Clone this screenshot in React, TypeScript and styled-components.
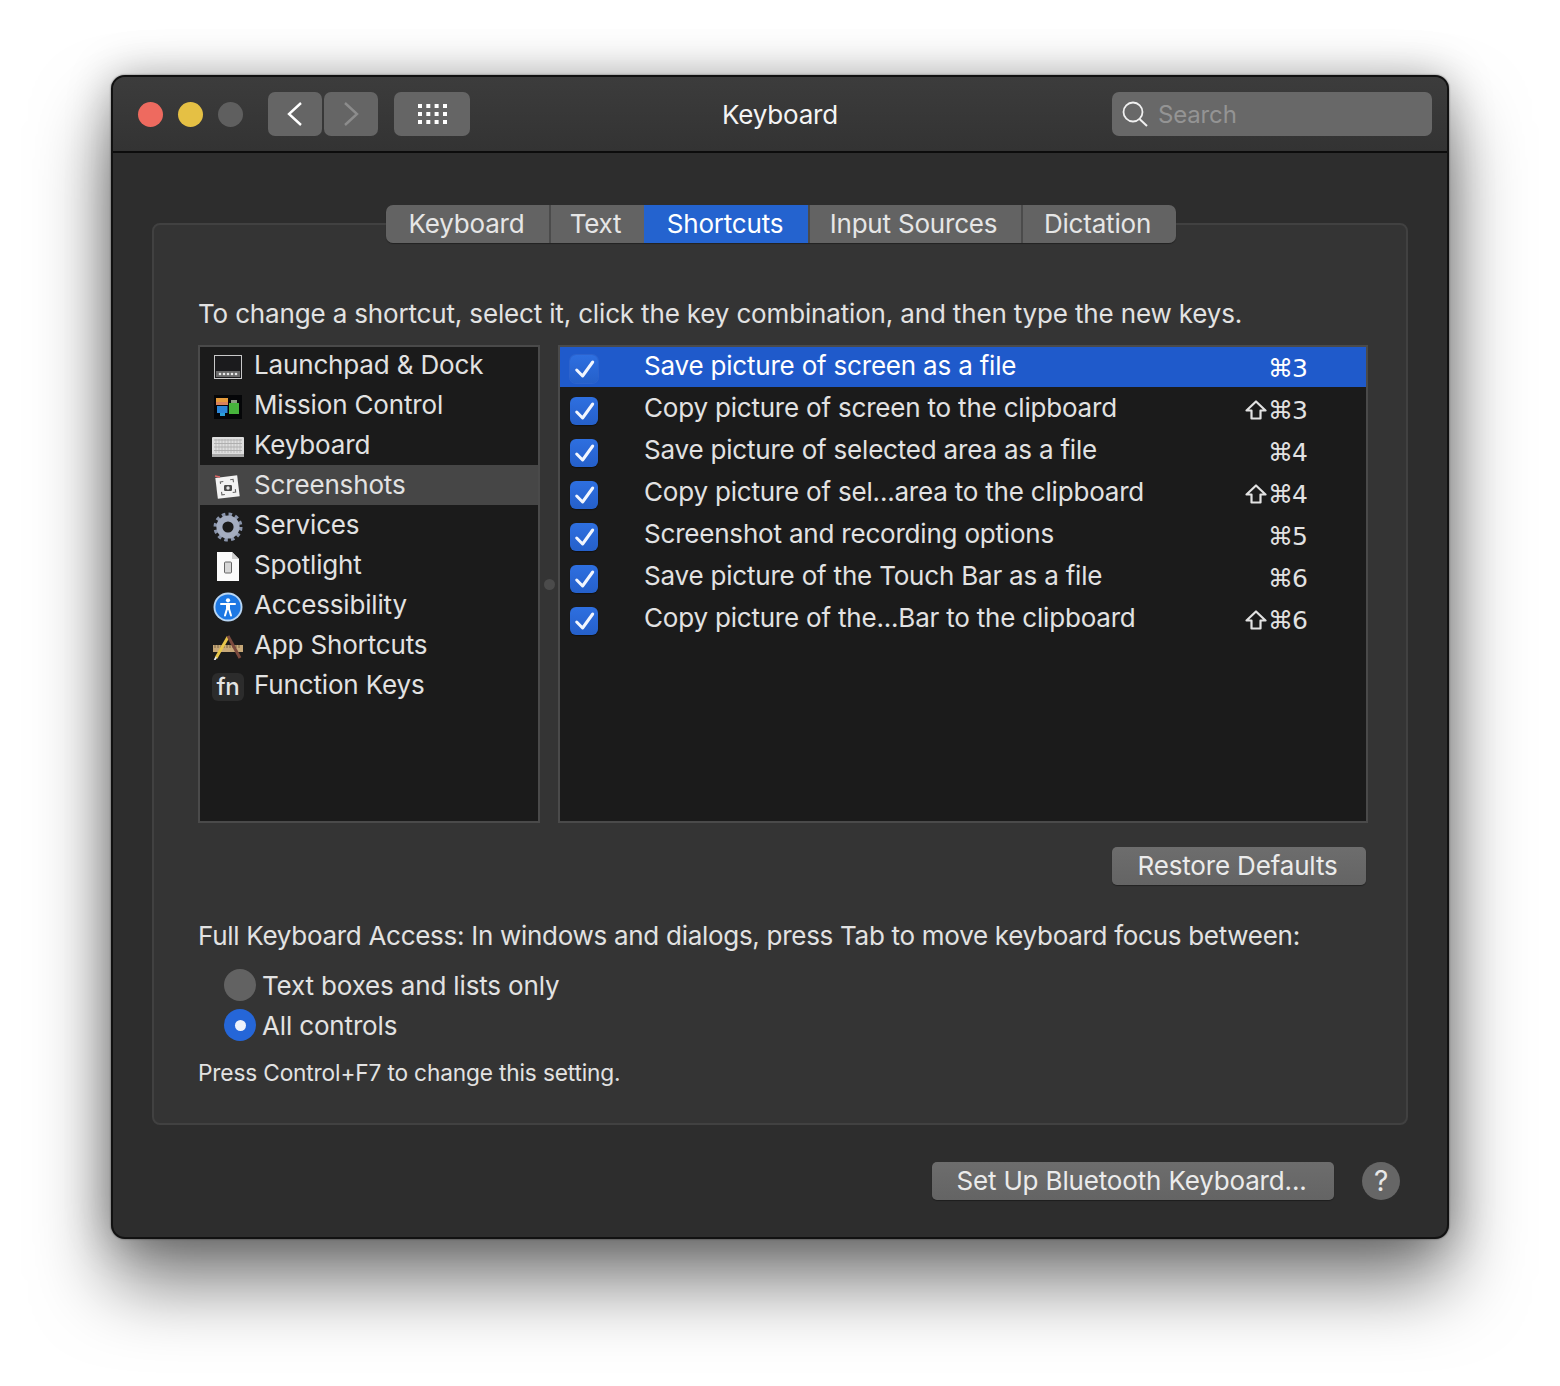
import { ReactNode } from "react";
import { createGlobalStyle, styled } from "styled-components";

const GlobalStyle = createGlobalStyle`
  html, body {
    margin: 0;
    padding: 0;
    background: #fff;
    font-family: Inter, "Liberation Sans", sans-serif;
  }
  * {
    box-sizing: border-box;
  }
`;

const Page = styled.div`
  width: 1560px;
  height: 1386px;
  padding: 75px 111px 0;
  overflow: hidden;
`;

const Window = styled.div`
  width: 1338px;
  height: 1164px;
  display: flex;
  flex-direction: column;
  background: #2d2d2d;
  border: 2px solid #111;
  border-radius: 14px;
  box-shadow: 0 0 2px rgba(0, 0, 0, 0.6), 0 44px 76px rgba(0, 0, 0, 0.52), 0 0 44px rgba(0, 0, 0, 0.28);
  color: #e2e2e2;
  letter-spacing: -0.16px;
  overflow: hidden;
`;

const TitleBar = styled.header`
  position: relative;
  flex: none;
  height: 76px;
  display: flex;
  align-items: center;
  padding: 0 15px 0 25px;
  background: linear-gradient(#3c3c3c, #333);
  border-bottom: 2px solid #0c0c0c;
`;

const TrafficLights = styled.div`
  display: flex;
  margin-right: 10px;
`;

const Light = styled.span<{ $color: string }>`
  width: 25px;
  height: 25px;
  margin-right: 15px;
  border-radius: 50%;
  background: ${(props) => props.$color};
`;

const ToolButton = styled.div<{ $width: number; $gap?: number }>`
  width: ${(props) => props.$width}px;
  height: 44px;
  margin-right: ${(props) => props.$gap ?? 0}px;
  display: flex;
  align-items: center;
  justify-content: center;
  background: #656565;
  border-radius: 7px;
`;

const Title = styled.div`
  position: absolute;
  left: 0;
  right: 0;
  top: 21px;
  text-align: center;
  font-size: 26px;
  line-height: 34px;
  letter-spacing: -0.16px;
  color: #f4f4f4;
  pointer-events: none;
`;

const SearchBox = styled.div`
  width: 320px;
  height: 44px;
  margin-left: auto;
  display: flex;
  align-items: center;
  gap: 10px;
  padding-left: 10px;
  background: #686868;
  border-radius: 7px;
  color: #949494;
  font-size: 24px;
`;

const Content = styled.main`
  flex: 1;
  display: flex;
  flex-direction: column;
  padding: 52px 39px 0;
`;

const TabBar = styled.nav`
  position: relative;
  z-index: 1;
  align-self: center;
  height: 38px;
  margin: 0 0 -20px 2px;
  display: flex;
  border-radius: 7px;
  overflow: hidden;
  box-shadow: 0 1px 1px rgba(0, 0, 0, 0.35);
`;

const Tab = styled.div<{ $width: number; $active?: boolean }>`
  width: ${(props) => props.$width}px;
  display: flex;
  align-items: center;
  justify-content: center;
  padding: 0 2px 2px 0;
  font-size: 26px;
  letter-spacing: -0.2px;
  color: ${(props) => (props.$active ? "#fff" : "#e6e6e6")};
  background: ${(props) => (props.$active ? "#2463cf" : "#636363")};
  box-shadow: ${(props) => (props.$active ? "none" : "inset 2px 0 #4b4b4b")};
  &:first-child {
    box-shadow: none;
  }
`;

const Panel = styled.section`
  height: 902px;
  padding: 72px 38px 0 44px;
  background: #343434;
  border: 2px solid #414141;
  border-radius: 8px;
`;

const Lead = styled.p`
  margin: 0 0 14px;
  font-size: 26px;
  line-height: 34px;
  white-space: nowrap;
`;

const Lists = styled.div`
  display: flex;
  height: 478px;
`;

const ListBox = styled.div<{ $width: number }>`
  width: ${(props) => props.$width}px;
  background: #1b1b1b;
  border: 2px solid #4a4a4a;
  overflow: hidden;
`;

const Rows = styled.ul`
  margin: -2px 0 0;
  padding: 0;
  list-style: none;
`;

const Gutter = styled.div`
  width: 18px;
  display: flex;
  align-items: center;
  justify-content: center;
`;

const Handle = styled.span`
  width: 11px;
  height: 11px;
  border-radius: 50%;
  background: #4b4b4b;
`;

const CategoryRow = styled.li<{ $selected?: boolean }>`
  height: 40px;
  display: flex;
  align-items: center;
  gap: 10px;
  padding: 0 0 2px 12px;
  font-size: 26px;
  background: ${(props) => (props.$selected ? "#464646" : "transparent")};
`;

const IconSlot = styled.span`
  width: 32px;
  height: 32px;
  flex: none;
  margin-top: 5px;
  display: flex;
  align-items: center;
  justify-content: center;
`;

const FnKey = styled.span`
  width: 32px;
  height: 28px;
  display: flex;
  align-items: center;
  justify-content: center;
  padding-bottom: 1px;
  border-radius: 6px;
  background: #2c2c2c;
  font-size: 24px;
  font-weight: 500;
  color: #e4e4e4;
`;

const ShortcutRow = styled.li<{ $selected?: boolean }>`
  height: 42px;
  display: flex;
  align-items: center;
  padding: 0 59px 2px 10px;
  font-size: 26px;
  letter-spacing: -0.2px;
  background: ${(props) => (props.$selected ? "#1f5acb" : "transparent")};
  color: ${(props) => (props.$selected ? "#fff" : "#e2e2e2")};
`;

const Check = styled.span<{ $selected?: boolean }>`
  width: 28px;
  height: 28px;
  flex: none;
  margin: 8px 46px 0 0;
  border-radius: 6px;
  background: linear-gradient(#2e6fe0, #2560ca);
  box-shadow: ${(props) => (props.$selected ? "0 0 0 1px rgba(255,255,255,0.06)" : "0 1px 1px rgba(0,0,0,0.4)")};
`;

const KeyCombo = styled.span`
  margin: 6px 0 0 auto;
  display: flex;
  align-items: center;
  gap: 1px;
  font-family: "DejaVu Sans", sans-serif;
  font-size: 25px;
  letter-spacing: -1px;
`;

const ButtonRow = styled.div`
  display: flex;
  justify-content: flex-end;
  padding-right: 2px;
  margin: 24px 0 34px;
`;

const PushButton = styled.div<{ $width: number }>`
  width: ${(props) => props.$width}px;
  height: 38px;
  display: flex;
  align-items: center;
  justify-content: center;
  padding: 0 3px 2px 0;
  background: linear-gradient(#6d6d6d, #646464);
  border-radius: 5px;
  box-shadow: 0 1px 1px rgba(0, 0, 0, 0.35);
  color: #ebebeb;
  font-size: 26px;
`;

const AccessText = styled.p`
  margin: 0 0 12px;
  font-size: 26px;
  line-height: 34px;
  letter-spacing: -0.29px;
  white-space: nowrap;
`;

const RadioRow = styled.div`
  height: 40px;
  display: flex;
  align-items: center;
  gap: 6px;
  padding-left: 26px;
  font-size: 26px;
`;

const Radio = styled.span<{ $on?: boolean }>`
  width: 32px;
  height: 32px;
  display: flex;
  align-items: center;
  justify-content: center;
  border-radius: 50%;
  background: ${(props) => (props.$on ? "#2566d8" : "#626262")};
  &::after {
    content: "";
    display: ${(props) => (props.$on ? "block" : "none")};
    width: 11px;
    height: 11px;
    border-radius: 50%;
    background: #eef2fb;
  }
`;

const Note = styled.p`
  margin: 13px 0 0;
  font-size: 22.7px;
  line-height: 30px;
`;

const Footer = styled.footer`
  display: flex;
  justify-content: flex-end;
  align-items: center;
  gap: 28px;
  margin-top: 37px;
  padding-right: 8px;
`;

const HelpButton = styled.div`
  width: 38px;
  height: 38px;
  display: flex;
  align-items: center;
  justify-content: center;
  border-radius: 50%;
  background: #666;
  color: #e8e8e8;
  font-size: 28px;
`;

const LaunchpadIcon = () => (
  <svg width="28" height="24" viewBox="0 0 28 24">
    <rect x="0.5" y="0.5" width="27" height="23" fill="#1b1b1d" stroke="#c9c9c9" />
    <rect x="2" y="16" width="24" height="6" fill="#6a6a6a" />
    {[5, 9, 13, 17, 21].map((x) => (
      <circle key={x} cx={x + 1} cy="19" r="1.3" fill="#e6e6e6" />
    ))}
  </svg>
);

const MissionIcon = () => (
  <svg width="28" height="24" viewBox="0 0 28 24">
    <rect width="28" height="24" fill="#050608" />
    <rect x="2" y="3" width="12" height="4" fill="#e49b3c" />
    <rect x="2" y="7" width="12" height="3" fill="#d9825b" />
    <rect x="3" y="11" width="10.5" height="7" fill="#2b86d8" />
    <rect x="6" y="18" width="5" height="3" fill="#2b9fd8" />
    <rect x="15" y="8" width="10" height="11" fill="#47b33c" />
    <rect x="17" y="5" width="6" height="3" fill="#8a9a80" />
  </svg>
);

const KeyboardIcon = () => (
  <svg width="32" height="20" viewBox="0 0 32 20">
    <rect width="32" height="20" rx="1" fill="#dedede" />
    {[3, 6.5, 10, 13.5].map((y) => (
      <path key={y} d={`M2 ${y}H30`} stroke="#a4a4a4" strokeWidth="0.8" />
    ))}
    {[4, 7, 10, 13, 16, 19, 22, 25, 28].map((x) => (
      <path key={x} d={`M${x} 2V16`} stroke="#b0b0b0" strokeWidth="0.7" />
    ))}
    <rect y="17" width="32" height="3" fill="#a8a8a8" />
  </svg>
);

const ScreenshotIcon = () => (
  <svg width="28" height="26" viewBox="0 0 28 26">
    <rect x="2.5" y="2.5" width="22" height="21" fill="#f2f2f2" transform="rotate(-7 14 13)" />
    <path d="M1 2l5 1" stroke="#d66" strokeWidth="1.5" />
    <path d="M7 9V7h3M17 6h3v3M21 16v3h-3M10 20H7v-3" fill="none" stroke="#666" strokeWidth="1.1" transform="rotate(-7 14 13)" />
    <rect x="10" y="11" width="8" height="6" rx="1.2" fill="#4a4a4a" />
    <circle cx="14" cy="14" r="1.7" fill="#e4e4e4" />
  </svg>
);

const GearIcon = () => (
  <svg width="30" height="30" viewBox="0 0 30 30">
    <circle cx="15" cy="15" r="12" fill="none" stroke="#8994ab" strokeWidth="5" strokeDasharray="3.3 3" />
    <circle cx="15" cy="15" r="8.6" fill="none" stroke="#a4adc0" strokeWidth="6" />
  </svg>
);

const SpotlightIcon = () => (
  <svg width="22" height="29" viewBox="0 0 22 29">
    <path d="M0 0H15L22 7V29H0Z" fill="#fbfbfb" />
    <path d="M15 0V7H22Z" fill="#cfcfcf" />
    <rect x="7.5" y="10" width="7" height="11" rx="1" fill="#d7d7d7" stroke="#666" />
  </svg>
);

const AccessibilityIcon = () => (
  <svg width="30" height="30" viewBox="0 0 30 30">
    <circle cx="15" cy="15" r="14.5" fill="#b8d6f4" />
    <circle cx="15" cy="15" r="12.6" fill="#1c78e4" />
    <circle cx="15" cy="8.3" r="2.1" fill="#fff" />
    <path d="M8 12H22" stroke="#fff" strokeWidth="2" strokeLinecap="round" />
    <rect x="13" y="12" width="4" height="6" fill="#fff" />
    <path d="M13.8 17.5L12 23.5M16.2 17.5L18 23.5" stroke="#fff" strokeWidth="2" strokeLinecap="round" />
  </svg>
);

const AppShortcutsIcon = () => (
  <svg width="32" height="26" viewBox="0 0 32 26">
    <rect x="1" y="11" width="30" height="7" fill="#c7a878" />
    <path d="M3 11v3M6 11v3M9 11v3M12 11v3M15 11v3M18 11v3M21 11v3M24 11v3M27 11v3" stroke="#6b5537" strokeWidth="0.8" />
    <path d="M4 24L16 3" stroke="#e7c64a" strokeWidth="3" />
    <path d="M16 2L28 24" stroke="#7b4a3e" strokeWidth="3" />
    <path d="M2.5 26l1.8-2.8" stroke="#eee" strokeWidth="1.8" />
  </svg>
);

const CheckIcon = () => (
  <svg width="28" height="28" viewBox="0 0 28 28">
    <path d="M6.7 15L12.6 21L22.7 7" fill="none" stroke="#f2f6fe" strokeWidth="3" strokeLinecap="round" strokeLinejoin="round" />
  </svg>
);

const ShiftIcon = () => (
  <svg width="22" height="20" viewBox="0 0 22 20">
    <path d="M11 1.5L20.5 10.5H15.5V18.5H6.5V10.5H1.5Z" fill="none" stroke="currentColor" strokeWidth="2.2" strokeLinejoin="round" />
  </svg>
);

const categories: { label: string; icon: ReactNode; selected?: boolean }[] = [
  { label: "Launchpad & Dock", icon: <LaunchpadIcon /> },
  { label: "Mission Control", icon: <MissionIcon /> },
  { label: "Keyboard", icon: <KeyboardIcon /> },
  { label: "Screenshots", icon: <ScreenshotIcon />, selected: true },
  { label: "Services", icon: <GearIcon /> },
  { label: "Spotlight", icon: <SpotlightIcon /> },
  { label: "Accessibility", icon: <AccessibilityIcon /> },
  { label: "App Shortcuts", icon: <AppShortcutsIcon /> },
  { label: "Function Keys", icon: <FnKey>fn</FnKey> },
];

const shortcuts = [
  { label: "Save picture of screen as a file", keys: "⌘3" },
  { label: "Copy picture of screen to the clipboard", keys: "⌘3", shift: true },
  { label: "Save picture of selected area as a file", keys: "⌘4" },
  { label: "Copy picture of sel...area to the clipboard", keys: "⌘4", shift: true },
  { label: "Screenshot and recording options", keys: "⌘5" },
  { label: "Save picture of the Touch Bar as a file", keys: "⌘6" },
  { label: "Copy picture of the...Bar to the clipboard", keys: "⌘6", shift: true },
];

const tabs = [
  { label: "Keyboard", width: 163 },
  { label: "Text", width: 95 },
  { label: "Shortcuts", width: 164, active: true },
  { label: "Input Sources", width: 213 },
  { label: "Dictation", width: 155 },
];

function App() {
  return (
    <Page>
      <GlobalStyle />
      <Window>
        <TitleBar>
          <TrafficLights>
            <Light $color="#ee6a5f" />
            <Light $color="#e5c044" />
            <Light $color="#5f5f5f" />
          </TrafficLights>
          <ToolButton $width={54} $gap={2}>
            <svg width="18" height="26" viewBox="0 0 18 26">
              <path d="M15 2L3 13L15 24" fill="none" stroke="#fff" strokeWidth="2.4" />
            </svg>
          </ToolButton>
          <ToolButton $width={54} $gap={16}>
            <svg width="18" height="26" viewBox="0 0 18 26">
              <path d="M3 2L15 13L3 24" fill="none" stroke="#8c8c8c" strokeWidth="2.4" />
            </svg>
          </ToolButton>
          <ToolButton $width={76}>
            <svg width="29" height="20" viewBox="0 0 29 20" fill="#fff">
              {[0, 8, 16].map((y) =>
                [0, 8.3, 16.6, 25].map((x) => <rect key={`${x}-${y}`} x={x} y={y} width="4" height="4" />)
              )}
            </svg>
          </ToolButton>
          <Title>Keyboard</Title>
          <SearchBox>
            <svg width="26" height="26" viewBox="0 0 26 26">
              <circle cx="11" cy="11" r="9.5" fill="none" stroke="#f0f0f0" strokeWidth="1.8" />
              <path d="M17.5 18L25 25" stroke="#f0f0f0" strokeWidth="2" />
            </svg>
            Search
          </SearchBox>
        </TitleBar>
        <Content>
          <TabBar>
            {tabs.map((tab) => (
              <Tab key={tab.label} $width={tab.width} $active={tab.active}>
                {tab.label}
              </Tab>
            ))}
          </TabBar>
          <Panel>
            <Lead>To change a shortcut, select it, click the key combination, and then type the new keys.</Lead>
            <Lists>
              <ListBox $width={342}>
                <Rows>
                  {categories.map((item) => (
                    <CategoryRow key={item.label} $selected={item.selected}>
                      <IconSlot>{item.icon}</IconSlot>
                      {item.label}
                    </CategoryRow>
                  ))}
                </Rows>
              </ListBox>
              <Gutter>
                <Handle />
              </Gutter>
              <ListBox $width={810}>
                <Rows>
                  {shortcuts.map((item, index) => (
                    <ShortcutRow key={item.label} $selected={index === 0}>
                      <Check $selected={index === 0}>
                        <CheckIcon />
                      </Check>
                      {item.label}
                      <KeyCombo>
                        {item.shift && <ShiftIcon />}
                        {item.keys}
                      </KeyCombo>
                    </ShortcutRow>
                  ))}
                </Rows>
              </ListBox>
            </Lists>
            <ButtonRow>
              <PushButton $width={254}>Restore Defaults</PushButton>
            </ButtonRow>
            <AccessText>Full Keyboard Access: In windows and dialogs, press Tab to move keyboard focus between:</AccessText>
            <RadioRow>
              <Radio />
              Text boxes and lists only
            </RadioRow>
            <RadioRow>
              <Radio $on />
              All controls
            </RadioRow>
            <Note>Press Control+F7 to change this setting.</Note>
          </Panel>
          <Footer>
            <PushButton $width={402}>Set Up Bluetooth Keyboard...</PushButton>
            <HelpButton>?</HelpButton>
          </Footer>
        </Content>
      </Window>
    </Page>
  );
}

export default App;
